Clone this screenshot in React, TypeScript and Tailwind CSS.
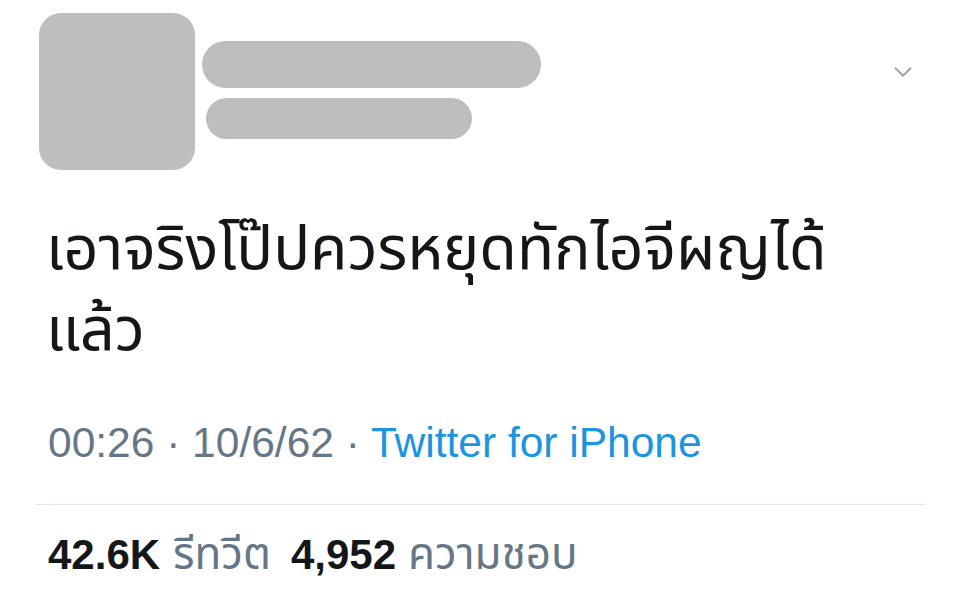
import { ChevronDown } from "lucide-react";

const thai = "font-['Noto_Sans_Thai','Noto_Sans',sans-serif]";

export default function App() {
  return (
    <div className="w-[960px] h-[599px] bg-white overflow-hidden font-['Liberation_Sans',sans-serif]">
      {/* header: avatar + name placeholders */}
      <div className="flex items-start pl-[39px] pr-[42px] pt-[13px]">
        <div className="w-[156px] h-[157px] rounded-[22px] bg-[#bebebe] shrink-0" />
        <div className="flex flex-col ml-[7px] pt-[28px] gap-[10px]">
          <div className="w-[339px] h-[47px] rounded-full bg-[#bebebe]" />
          <div className="w-[266px] h-[41px] ml-[4px] rounded-full bg-[#bebebe]" />
        </div>
        <ChevronDown className="ml-auto mt-[44px] text-[#9aa5ae]" size={30} strokeWidth={1.5} />
      </div>

      {/* tweet body */}
      <p className={`${thai} px-[46px] mt-[40px] text-[61px] leading-[81px] text-[#14171a]`}>
        เอาจริงโป๊ปควรหยุดทักไอจีผญได้
        <br />
        แล้ว
      </p>

      {/* meta */}
      <div className="px-[48px] mt-[47px] text-[42.5px] leading-[48px] text-[#657786]">
        00:26 · 10/6/62 · <span className="text-[#1b95e0]">Twitter for iPhone</span>
      </div>

      <div className="mx-[35px] mt-[37px] h-px bg-[#e1e8ed]" />

      {/* stats */}
      <div className="flex items-baseline px-[48px] mt-[26px] text-[42px] leading-[48px]">
        <span className="font-bold text-[#14171a]">42.6K</span>
        <span className={`${thai} ml-[13px] text-[44px] text-[#657786]`}>รีทวีต</span>
        <span className="ml-[20px] font-bold text-[#14171a]">4,952</span>
        <span className={`${thai} ml-[12px] text-[44px] text-[#657786]`}>ความชอบ</span>
      </div>
    </div>
  );
}
